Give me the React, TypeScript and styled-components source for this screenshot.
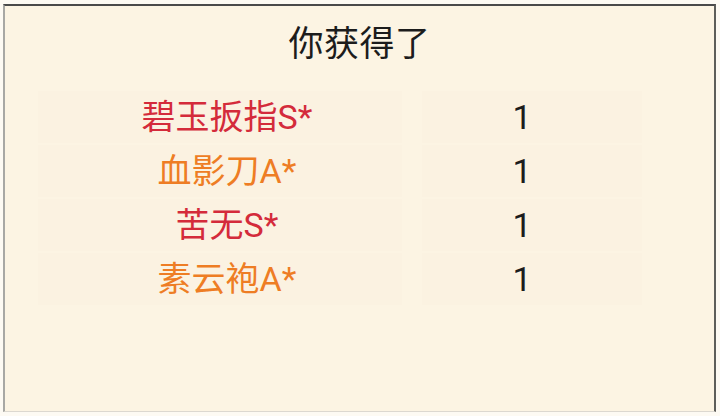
import React from "react"
import styled, { createGlobalStyle } from "styled-components"

const GlobalStyle = createGlobalStyle`
  html, body {
    margin: 0;
    padding: 0;
    background: #ffffff;
  }
  body {
    font-family: "Noto Sans CJK SC", "Noto Sans", sans-serif;
  }
`

const Frame = styled.div`
  width: 720px;
  height: 416px;
  box-sizing: border-box;
  padding: 4px 4px 4px 3px;
  background: #fdfaf3;
`

const Card = styled.div`
  height: 100%;
  box-sizing: border-box;
  background: #fcf4e3;
  border-top: 2px solid #4a4a4a;
  border-left: 2px solid #a8a8a4;
  border-right: 2px solid #5e5e5a;
  border-bottom: 1px solid #dcd8d0;
  display: flex;
  flex-direction: column;
  align-items: center;
`

const Title = styled.h2`
  margin: 13px 0 0;
  font-size: 35px;
  font-weight: 400;
  line-height: 44px;
  color: #1c1c1c;
  letter-spacing: 0.5px;
`

const Table = styled.div`
  margin-top: 28px;
  align-self: flex-start;
  margin-left: 33px;
  width: 604px;
  display: flex;
  flex-direction: column;
  gap: 2px;
`

const Row = styled.div`
  display: grid;
  grid-template-columns: 364px 220px;
  column-gap: 20px;
  height: 52px;
`

const Cell = styled.div`
  background: #fbf2e1;
  display: flex;
  align-items: center;
  justify-content: center;
`

const Name = styled.span<{ $tone: "red" | "orange" }>`
  font-family: "Roboto", "Noto Sans CJK SC", sans-serif;
  font-size: 34px;
  line-height: 1;
  color: ${(p) => (p.$tone === "red" ? "#d42b3b" : "#ee7d24")};
  padding-left: 14px;
`

const Count = styled.span`
  font-family: "Roboto", "Noto Sans", sans-serif;
  font-size: 34px;
  line-height: 1;
  color: #1c1c1c;
  margin-left: -20px;
`

const items: { name: string; tone: "red" | "orange"; count: number }[] = [
  { name: "碧玉扳指S*", tone: "red", count: 1 },
  { name: "血影刀A*", tone: "orange", count: 1 },
  { name: "苦无S*", tone: "red", count: 1 },
  { name: "素云袍A*", tone: "orange", count: 1 },
]

export default function App() {
  return (
    <>
      <GlobalStyle />
      <Frame>
        <Card>
          <Title>你获得了</Title>
          <Table>
            {items.map((item) => (
              <Row key={item.name}>
                <Cell>
                  <Name $tone={item.tone}>{item.name}</Name>
                </Cell>
                <Cell>
                  <Count>{item.count}</Count>
                </Cell>
              </Row>
            ))}
          </Table>
        </Card>
      </Frame>
    </>
  )
}
